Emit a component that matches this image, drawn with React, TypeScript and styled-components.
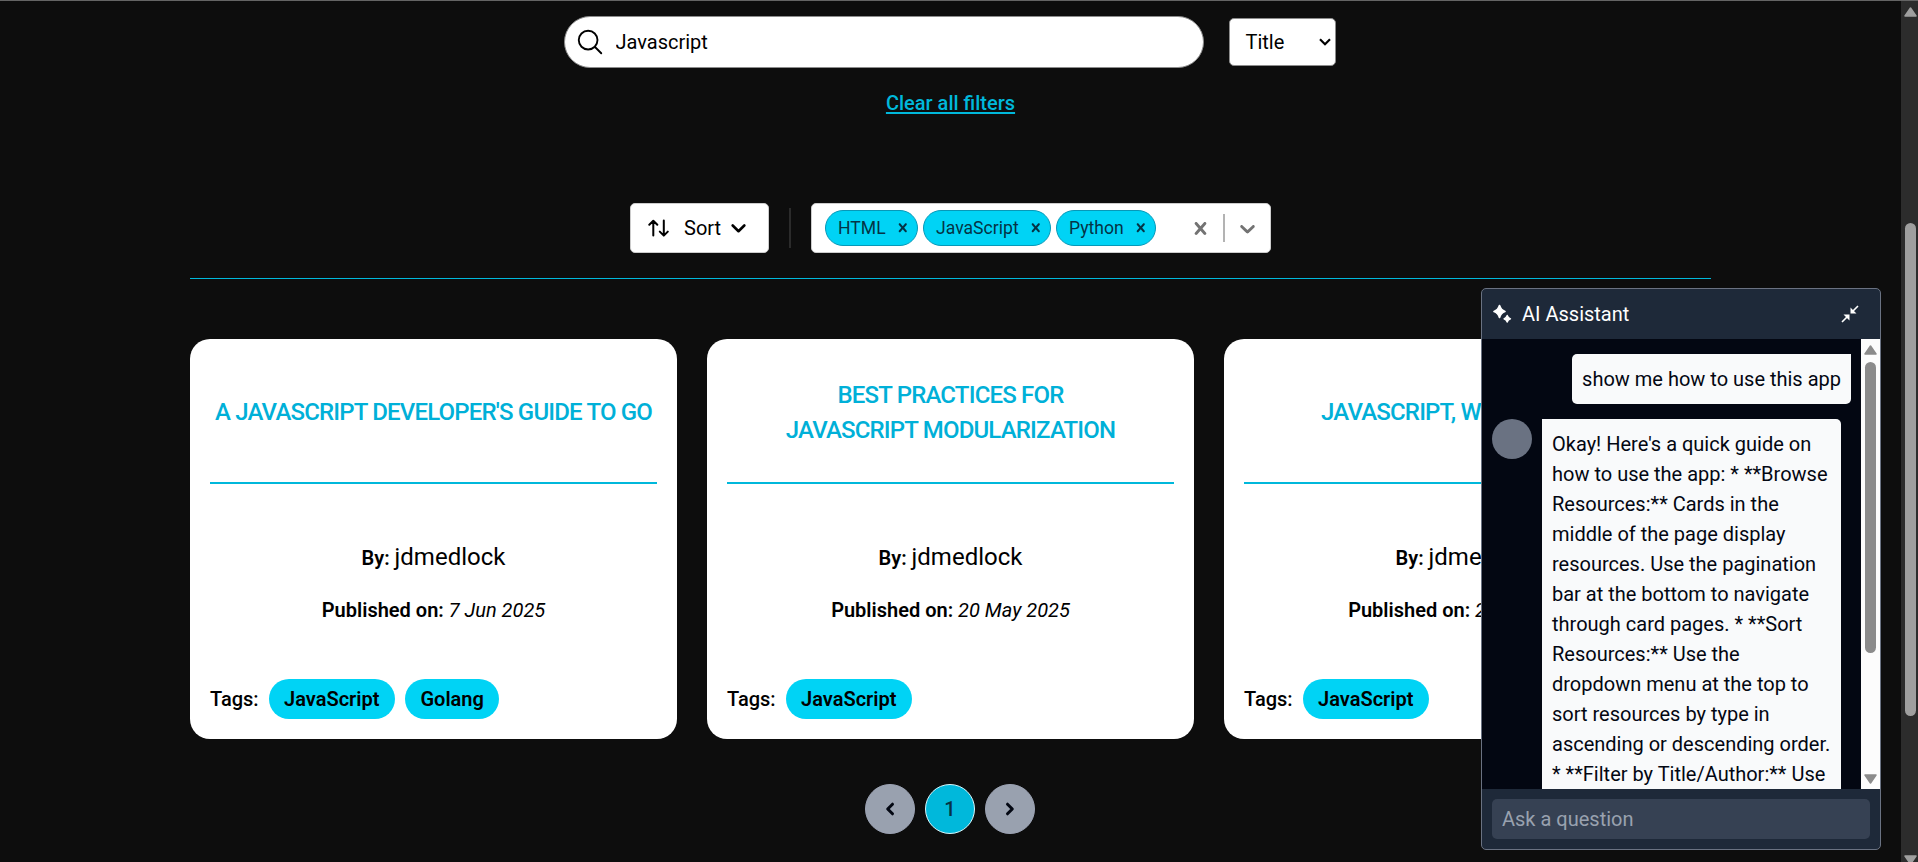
import React from "react";
import styled, { createGlobalStyle } from "styled-components";

const GlobalStyle = createGlobalStyle`
  *, *::before, *::after { box-sizing: border-box; }
  html, body { margin: 0; padding: 0; overflow: hidden; background: #0d0d0d; }
  body, input, button { font-family: Roboto, sans-serif; font-size: 20px; line-height: 30px; color: #000; }
  svg { display: block; flex: none; }
  h2, p { margin: 0; }
`;

const Window = styled.div`
  display: flex;
  height: 862px;
  border-top: 1px solid #646464;
  overflow: hidden;
`;

const Page = styled.main`
  flex: 1;
  display: flex;
  flex-direction: column;
  align-items: center;
  padding-top: 15px;
`;

const SearchRow = styled.div`
  display: flex;
  align-items: center;
  gap: 25px;
  height: 52px;
  margin-right: 1px;
`;

const SearchField = styled.label`
  display: flex;
  align-items: center;
  width: 640px;
  height: 52px;
  padding: 0 10px;
  border: 1px solid #8c8c8c;
  border-radius: 26px;
  background: #fff;
`;

const SearchInput = styled.input`
  flex: 1;
  margin-left: 10.5px;
  padding: 0;
  border: 0;
  outline: 0;
  background: transparent;
`;

const FieldSelect = styled.button`
  display: flex;
  align-items: center;
  justify-content: space-between;
  width: 107px;
  height: 48px;
  padding: 0 4px 0 15.5px;
  border: 1px solid #8c8c8c;
  border-radius: 5px;
  background: #fff;
`;

const ClearFilters = styled.a`
  margin-top: 20px;
  color: #00b8db;
  font-weight: 500;
  text-decoration: underline;
  text-decoration-thickness: 2px;
  text-underline-offset: 2px;
`;

const Toolbar = styled.div`
  display: flex;
  align-items: center;
  justify-content: center;
  gap: 20px;
  width: 1521px;
  height: 76px;
  margin-top: 85px;
  padding-bottom: 25px;
  border-bottom: 1px solid #00b8db;
`;

const Control = styled.div`
  display: flex;
  align-items: center;
  height: 50px;
  border: 1px solid #ccc;
  border-radius: 5px;
  background: #fff;
`;

const SortButton = styled(Control)`
  width: 139px;
  padding-left: 17px;
  gap: 10px;
  svg:first-child { margin-right: 4px; }
`;

const Rule = styled.span<{ $height: number; $color: string }>`
  width: 2px;
  height: ${(p) => p.$height}px;
  background: ${(p) => p.$color};
`;

const TagSelect = styled(Control)`
  width: 460px;
  padding: 0 10px 0 13px;
`;

const Chips = styled.div`
  flex: 1;
  display: flex;
  gap: 5px;
`;

const Chip = styled.span<{ $width: number }>`
  display: flex;
  align-items: center;
  justify-content: space-between;
  width: ${(p) => p.$width}px;
  height: 36px;
  padding: 0 6px 0 12px;
  border: 1px solid #0698b8;
  border-radius: 18px;
  background: #00d3f5;
  color: #053345;
  font-size: 17.6px;
`;

const Indicators = styled.div`
  display: flex;
  align-items: center;
  gap: 10px;
  color: #737373;
`;

const Cards = styled.section`
  display: grid;
  grid-template-columns: repeat(3, 487px);
  gap: 30px;
  margin-top: 60px;
`;

const Card = styled.article`
  display: flex;
  flex-direction: column;
  height: 400px;
  padding: 20px;
  border-radius: 20px;
  background: #fff;
  text-align: center;
`;

const CardTitle = styled.h2`
  display: flex;
  align-items: center;
  justify-content: center;
  height: 125px;
  padding-bottom: 16px;
  border-bottom: 2px solid #00b8db;
  color: #00b0d8;
  font-size: 24px;
  line-height: 35px;
  font-weight: 500;
  letter-spacing: -0.82px;
  white-space: pre-line;
`;

const Byline = styled.p`
  margin-top: 56px;
  line-height: 35px;
  b { font-weight: 600; }
  span { font-size: 24px; }
`;

const Published = styled.p`
  margin-top: 19px;
  b { font-weight: 600; }
`;

const TagList = styled.div`
  display: flex;
  align-items: center;
  gap: 10px;
  margin-top: auto;
  font-weight: 500;
`;

const Tag = styled.span`
  height: 40px;
  padding: 5px 15.5px;
  border-radius: 20px;
  background: #00d3f5;
  font-weight: 600;
`;

const Pagination = styled.nav`
  display: flex;
  gap: 10px;
  margin: 45px 1px 0 0;
`;

const PageButton = styled.button<{ $current?: boolean }>`
  display: flex;
  align-items: center;
  justify-content: center;
  width: 50px;
  height: 50px;
  padding: 0;
  border: 1px solid ${(p) => (p.$current ? "#d8f5fa" : "#9ca3b4")};
  border-radius: 50%;
  background: ${(p) => (p.$current ? "#00b8db" : "#99a1af")};
  color: ${(p) => (p.$current ? "#053345" : "#030712")};
  font-weight: 500;
`;

const Track = styled.div<{ $width: number; $color: string; $top: number }>`
  flex: none;
  display: flex;
  flex-direction: column;
  align-items: center;
  width: ${(p) => p.$width}px;
  padding-top: ${(p) => p.$top}px;
  background: ${(p) => p.$color};
`;

const Thumb = styled.span<{ $height: number; $above: number; $below: number; $color: string }>`
  flex: none;
  width: 11px;
  height: ${(p) => p.$height}px;
  margin: ${(p) => p.$above}px 0 ${(p) => p.$below}px;
  border-radius: 6px;
  background: ${(p) => p.$color};
`;

const PageTrack = styled(Track)`
  padding-left: 2px;
`;

const ChatPanel = styled.aside`
  position: fixed;
  left: 1481px;
  top: 288px;
  display: flex;
  flex-direction: column;
  width: 400px;
  height: 562px;
  border: 1px solid #6a7282;
  border-radius: 5px;
  background: #1e2939;
  overflow: hidden;
`;

const ChatHeader = styled.header`
  display: flex;
  align-items: center;
  height: 50px;
  padding: 0 20px 0 10px;
  color: #fff;
`;

const ChatTitle = styled.span`
  flex: 1;
  margin-left: 10px;
`;

const ChatBody = styled.div`
  display: flex;
  height: 450px;
  background: #030712;
`;

const Messages = styled.div`
  flex: 1;
  display: flex;
  flex-direction: column;
  gap: 15px;
  padding: 15px 10px 0;
  overflow: hidden;
`;

const UserBubble = styled.p`
  align-self: flex-end;
  padding: 10px;
  border-radius: 5px 0 5px 5px;
  background: #f9fafb;
  color: #030712;
  white-space: nowrap;
`;

const Reply = styled.div`
  display: flex;
  gap: 10px;
`;

const Avatar = styled.span`
  flex: none;
  width: 40px;
  height: 40px;
  border-radius: 50%;
  background: #6a7282;
`;

const ReplyBubble = styled.p`
  width: 299px;
  padding: 10px;
  border-radius: 0 5px 5px 5px;
  background: #f9fafb;
  color: #030712;
  white-space: pre;
`;

const ChatFooter = styled.footer`
  display: flex;
  padding: 10px;
`;

const QuestionInput = styled.input`
  width: 378px;
  height: 40px;
  padding: 0 10px;
  border: 0;
  border-radius: 5px;
  background: #364153;
  &::placeholder { color: #99a1af; opacity: 1; }
`;

const SearchIcon = () => (
  <svg width="30" height="30" viewBox="0 0 24 24" fill="none" stroke="#000" strokeWidth="1.5" strokeLinecap="round" strokeLinejoin="round">
    <path d="m21 21-5.197-5.197m0 0A7.5 7.5 0 1 0 5.196 5.196a7.5 7.5 0 0 0 10.607 10.607Z" />
  </svg>
);

const SelectArrow = () => (
  <svg width="12" height="8" viewBox="0 0 12 8" fill="none" stroke="#000" strokeWidth="2.2">
    <path d="M1 1.2 6 6.2 11 1.2" />
  </svg>
);

const SortIcon = () => (
  <svg width="22" height="18" viewBox="0 0 22 18" fill="none" stroke="#000" strokeWidth="2" strokeLinecap="round" strokeLinejoin="round">
    <path d="M1.300 5.700 5.300 1.700 9.300 5.700M5.300 2.200v14.400M15.800 1.600v14.400M11.800 12.600 15.800 16.600 19.800 12.600" />
  </svg>
);

const SortChevron = () => (
  <svg width="15" height="9" viewBox="0 0 15 9" fill="none" stroke="#000" strokeWidth="2.6" strokeLinecap="round" strokeLinejoin="round">
    <path d="M1.7 1.5 7.5 7.2 13.3 1.5" />
  </svg>
);

const CROSS =
  "M14.348 14.849c-0.469 0.469-1.229 0.469-1.697 0l-2.651-3.030-2.651 3.029c-0.469 0.469-1.229 0.469-1.697 0-0.469-0.469-0.469-1.229 0-1.697l2.758-3.15-2.759-3.152c-0.469-0.469-0.469-1.228 0-1.697s1.228-0.469 1.697 0l2.652 3.031 2.651-3.031c0.469-0.469 1.228-0.469 1.697 0s0.469 1.229 0 1.697l-2.758 3.152 2.758 3.15c0.469 0.469 0.469 1.229 0 1.698z";
const DOWN =
  "M4.516 7.548c0.436-0.446 1.043-0.481 1.576 0l3.908 3.747 3.908-3.747c0.533-0.481 1.141-0.446 1.574 0 0.436 0.445 0.408 1.197 0 1.615-0.406 0.418-4.695 4.502-4.695 4.502-0.217 0.223-0.502 0.335-0.787 0.335s-0.57-0.112-0.789-0.335c0 0-4.287-4.084-4.695-4.502s-0.436-1.17 0-1.615z";

const Glyph = ({ d, size }: { d: string; size: number }) => (
  <svg width={size} height={size} viewBox="0 0 20 20" fill="currentColor">
    <path d={d} />
  </svg>
);

const PageArrow = ({ next }: { next?: boolean }) => (
  <svg width="10" height="14" viewBox="0 0 10 14" fill="none" stroke="currentColor" strokeWidth="3" strokeLinecap="round" strokeLinejoin="round">
    <path d={next ? "M2.5 2.2 7.3 7 2.5 11.8" : "M7.5 2.2 2.7 7 7.5 11.8"} />
  </svg>
);

const SparkleIcon = () => (
  <svg width="20" height="20" viewBox="0 0 20 20" fill="#fff">
    <path d="M7.5 1.500Q8.800 6 13 7.500 8.800 9 7.500 13.500 6.200 9 2 7.500 6.200 6 7.500 1.500Z" stroke="#fff" strokeWidth="1.700" strokeLinejoin="round" />
    <path d="M15.200 11.500Q16 14 18.500 14.800 16 15.600 15.200 18 14.400 15.600 12 14.800 14.400 14 15.200 11.500Z" stroke="#fff" strokeWidth="1.400" strokeLinejoin="round" />
  </svg>
);

const ShrinkIcon = () => (
  <svg width="20" height="20" viewBox="0 0 20 20" fill="#fff" stroke="#fff" strokeWidth="1.6">
    <path d="M18 2 12 8M2 18 8 12" />
    <path d="M10.500 3.500V9.500H16.500ZM9.500 16.500V10.500H3.500Z" stroke="none" />
  </svg>
);

const ScrollArrow = ({ down, color }: { down?: boolean; color: string }) => (
  <svg width="13" height="10" viewBox="0 0 13 10" fill={color} stroke={color} strokeWidth="1.500" strokeLinejoin="round">
    <path d={down ? "M1 1H12L6.500 9Z" : "M1 9H12L6.500 1Z"} />
  </svg>
);

const chips = [
  { label: "HTML", width: 93 },
  { label: "JavaScript", width: 128 },
  { label: "Python", width: 100 },
];

const resources = [
  { title: "A JAVASCRIPT DEVELOPER'S GUIDE TO GO", date: "7 Jun 2025", tags: ["JavaScript", "Golang"] },
  { title: "BEST PRACTICES FOR\nJAVASCRIPT MODULARIZATION", date: "20 May 2025", tags: ["JavaScript"] },
  { title: "JAVASCRIPT, WHAT IS THIS?", date: "20 May 2025", tags: ["JavaScript"] },
];

const reply = `Okay! Here's a quick guide on
how to use the app: * **Browse
Resources:** Cards in the
middle of the page display
resources. Use the pagination
bar at the bottom to navigate
through card pages. * **Sort
Resources:** Use the
dropdown menu at the top to
sort resources by type in
ascending or descending order.
* **Filter by Title/Author:** Use`;

export default function App() {
  return (
    <>
      <GlobalStyle />
      <Window>
        <Page>
          <SearchRow>
            <SearchField>
              <SearchIcon />
              <SearchInput defaultValue="Javascript" />
            </SearchField>
            <FieldSelect>
              Title
              <SelectArrow />
            </FieldSelect>
          </SearchRow>
          <ClearFilters>Clear all filters</ClearFilters>
          <Toolbar>
            <SortButton>
              <SortIcon />
              Sort
              <SortChevron />
            </SortButton>
            <Rule $height={40} $color="#2b2b2b" />
            <TagSelect>
              <Chips>
                {chips.map((c) => (
                  <Chip key={c.label} $width={c.width}>
                    {c.label}
                    <Glyph d={CROSS} size={17.5} />
                  </Chip>
                ))}
              </Chips>
              <Indicators>
                <Glyph d={CROSS} size={25} />
                <Rule $height={28} $color="#b3b3b3" />
                <Glyph d={DOWN} size={25} />
              </Indicators>
            </TagSelect>
          </Toolbar>
          <Cards>
            {resources.map((r) => (
              <Card key={r.title}>
                <CardTitle>{r.title}</CardTitle>
                <Byline>
                  <b>By:</b> <span>jdmedlock</span>
                </Byline>
                <Published>
                  <b>Published on:</b> <i>{r.date}</i>
                </Published>
                <TagList>
                  Tags:
                  {r.tags.map((t) => (
                    <Tag key={t}>{t}</Tag>
                  ))}
                </TagList>
              </Card>
            ))}
          </Cards>
          <Pagination>
            <PageButton>
              <PageArrow />
            </PageButton>
            <PageButton $current>1</PageButton>
            <PageButton>
              <PageArrow next />
            </PageButton>
          </Pagination>
        </Page>
        <PageTrack $width={17} $color="#2c2c2c" $top={6}>
          <ScrollArrow color="#9f9f9f" />
          <Thumb $height={493} $above={206} $below={139} $color="#9f9f9f" />
          <ScrollArrow down color="#9f9f9f" />
        </PageTrack>
      </Window>
      <ChatPanel>
        <ChatHeader>
          <SparkleIcon />
          <ChatTitle>AI Assistant</ChatTitle>
          <ShrinkIcon />
        </ChatHeader>
        <ChatBody>
          <Messages>
            <UserBubble>show me how to use this app</UserBubble>
            <Reply>
              <Avatar />
              <ReplyBubble>{reply}</ReplyBubble>
            </Reply>
          </Messages>
          <Track $width={19} $color="#fcfcfc" $top={6}>
            <ScrollArrow color="#8b8b8b" />
            <Thumb $height={291} $above={7} $below={121} $color="#8b8b8b" />
            <ScrollArrow down color="#8b8b8b" />
          </Track>
        </ChatBody>
        <ChatFooter>
          <QuestionInput placeholder="Ask a question" />
        </ChatFooter>
      </ChatPanel>
    </>
  );
}
